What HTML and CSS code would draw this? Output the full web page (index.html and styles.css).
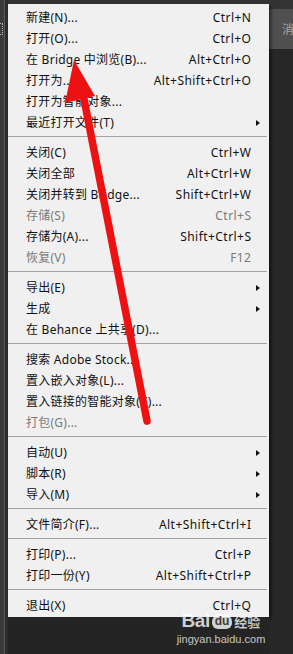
FILE: index.html
```html
<!DOCTYPE html>
<html lang="zh-CN">
<head>
<meta charset="utf-8">
<title>文件菜单</title>
<link rel="stylesheet" href="styles.css">
</head>
<body>
<div class="screen">
  <div class="left-strip"><span class="tool-mark"></span></div>
  <div class="top-strip"></div>
  <div class="right-col">
    <div class="rc-top"></div>
    <div class="rc-bar"><span class="rc-div"></span><span class="rc-text">消</span></div>
    <div class="rc-rest"></div>
  </div>
  <div class="menu">
    <div class="item"><span class="label">新建(N)...</span><span class="sc">Ctrl+N</span></div>
    <div class="item"><span class="label">打开(O)...</span><span class="sc">Ctrl+O</span></div>
    <div class="item"><span class="label">在 Bridge 中浏览(B)...</span><span class="sc">Alt+Ctrl+O</span></div>
    <div class="item"><span class="label">打开为...</span><span class="sc">Alt+Shift+Ctrl+O</span></div>
    <div class="item"><span class="label">打开为智能对象...</span></div>
    <div class="item"><span class="label">最近打开文件(T)</span><span class="sub"></span></div>
    <div class="sep"></div>
    <div class="item"><span class="label">关闭(C)</span><span class="sc">Ctrl+W</span></div>
    <div class="item"><span class="label">关闭全部</span><span class="sc">Alt+Ctrl+W</span></div>
    <div class="item"><span class="label">关闭并转到 Bridge...</span><span class="sc">Shift+Ctrl+W</span></div>
    <div class="item disabled"><span class="label">存储(S)</span><span class="sc">Ctrl+S</span></div>
    <div class="item"><span class="label">存储为(A)...</span><span class="sc">Shift+Ctrl+S</span></div>
    <div class="item disabled"><span class="label">恢复(V)</span><span class="sc">F12</span></div>
    <div class="sep"></div>
    <div class="item"><span class="label">导出(E)</span><span class="sub"></span></div>
    <div class="item"><span class="label">生成</span><span class="sub"></span></div>
    <div class="item"><span class="label">在 Behance 上共享(D)...</span></div>
    <div class="sep"></div>
    <div class="item"><span class="label">搜索 Adobe Stock...</span></div>
    <div class="item"><span class="label">置入嵌入对象(L)...</span></div>
    <div class="item"><span class="label">置入链接的智能对象(K)...</span></div>
    <div class="item disabled"><span class="label">打包(G)...</span></div>
    <div class="sep"></div>
    <div class="item"><span class="label">自动(U)</span><span class="sub"></span></div>
    <div class="item"><span class="label">脚本(R)</span><span class="sub"></span></div>
    <div class="item"><span class="label">导入(M)</span><span class="sub"></span></div>
    <div class="sep"></div>
    <div class="item"><span class="label">文件简介(F)...</span><span class="sc">Alt+Shift+Ctrl+I</span></div>
    <div class="sep"></div>
    <div class="item"><span class="label">打印(P)...</span><span class="sc">Ctrl+P</span></div>
    <div class="item"><span class="label">打印一份(Y)</span><span class="sc">Alt+Shift+Ctrl+P</span></div>
    <div class="sep"></div>
    <div class="item"><span class="label">退出(X)</span><span class="sc">Ctrl+Q</span></div>
  </div>
  <div class="bottom-strip"></div>

  <svg class="arrow" width="293" height="654" viewBox="0 0 293 654" aria-hidden="true">
    <line x1="83" y1="94" x2="147" y2="421" stroke="#ee1111" stroke-width="7.5" stroke-linecap="round"/>
    <polygon points="74,60 65,103 95,96" fill="#ee1111"/>
  </svg>

  <div class="watermark">
    <div class="wm-logo"><span class="wm-bai">Bai</span><span class="wm-du">du</span><span class="wm-jy">经验</span></div>
    <div class="wm-url">jingyan.baidu.com</div>
  </div>
</div>
</body>
</html>
```

FILE: styles.css
```css
* { box-sizing: border-box; }
html, body { margin: 0; padding: 0; }
body {
  background: #262626;
  width: 293px;
  height: 654px;
  overflow: hidden;
  font-family: "Noto Sans", "Noto Sans CJK SC", sans-serif;
}
.screen {
  position: relative;
  width: 293px;
  height: 654px;
  display: grid;
  grid-template-columns: 8px 261px 24px;
  grid-template-rows: 4px 613px 37px;
}
.left-strip {
  grid-column: 1;
  grid-row: 1 / 4;
  background: #3a3a3a;
  border-right: 3px solid #2c2c2c;
  position: relative;
}
.left-strip::after {
  content: "";
  display: block;
  width: 1px;
  height: 100%;
  margin-left: 4px;
  background: #5a5a5a;
}
.tool-mark {
  position: absolute;
  left: 0;
  top: 23px;
  width: 3px;
  height: 12px;
  border: 1px dotted #bbbbbb;
  border-left: none;
}
.top-strip {
  grid-column: 2;
  grid-row: 1;
  background: #323232;
}
.right-col {
  grid-column: 3;
  grid-row: 1 / 4;
  display: flex;
  flex-direction: column;
}
.rc-top { height: 9px; background: #333333; }
.rc-bar {
  height: 40px;
  background: #4f4f4f;
  display: flex;
  align-items: center;
  padding-left: 8px;
  gap: 5px;
}
.rc-div { width: 1px; height: 12px; background: #8a8a8a; }
.rc-text {
  font-family: "Noto Sans CJK SC", sans-serif;
  font-size: 12px;
  line-height: 14px;
  color: #a8a8a8;
}
.rc-rest { flex: 1; background: #272727; }
.bottom-strip {
  grid-column: 2;
  grid-row: 3;
  background: #242424;
}
.menu {
  grid-column: 2;
  grid-row: 2;
  background: #f0f0f0;
  padding: 3px 0 1px 0;
  box-shadow: 2px 2px 3px rgba(0, 0, 0, 0.55);
  display: flex;
  flex-direction: column;
}
.item {
  height: 21px;
  display: grid;
  grid-template-columns: 18px 1fr auto 18px;
  align-items: center;
  font-size: 12px;
  line-height: 14px;
  color: #111111;
  white-space: nowrap;
}
.label { grid-column: 2; letter-spacing: 0.25px; }
.sc { grid-column: 3; letter-spacing: 0.45px; margin-right: -0.45px; }
.sub {
  grid-column: 4;
  margin-left: 5px;
  width: 0;
  height: 0;
  border-top: 3.5px solid transparent;
  border-bottom: 3.5px solid transparent;
  border-left: 4px solid #111111;
}
.disabled { color: #7a7a7a; }
.sep {
  height: 1px;
  margin: 3px 2px 5px 0;
  background: #a3a3a3;
}
.arrow {
  position: absolute;
  left: 0;
  top: 0;
  pointer-events: none;
}
.watermark {
  position: absolute;
  left: 175px;
  top: 611px;
  width: 92px;
  display: flex;
  flex-direction: column;
  align-items: center;
  color: rgba(255, 255, 255, 0.8);
}
.wm-logo {
  display: flex;
  align-items: center;
  height: 20px;
  gap: 2px;
}
.wm-bai {
  font-family: "Liberation Sans", sans-serif;
  font-weight: bold;
  font-size: 19px;
  line-height: 20px;
  letter-spacing: -0.5px;
  color: rgba(255, 255, 255, 0.8);
}
.wm-du {
  padding: 0 3px;
  height: 15px;
  line-height: 15px;
  border-radius: 8px 8px 6px 6px;
  background: rgba(255, 255, 255, 0.8);
  color: #3a3a3a;
  font-family: "Liberation Sans", sans-serif;
  font-weight: bold;
  font-size: 12px;
}
.wm-jy {
  font-family: "Noto Sans CJK SC", sans-serif;
  font-weight: bold;
  font-size: 13px;
  line-height: 15px;
  color: rgba(255, 255, 255, 0.75);
}
.wm-url {
  font-family: "Liberation Sans", sans-serif;
  font-size: 11px;
  line-height: 13px;
  color: rgba(255, 255, 255, 0.75);
  margin-top: 2px;
}
```
